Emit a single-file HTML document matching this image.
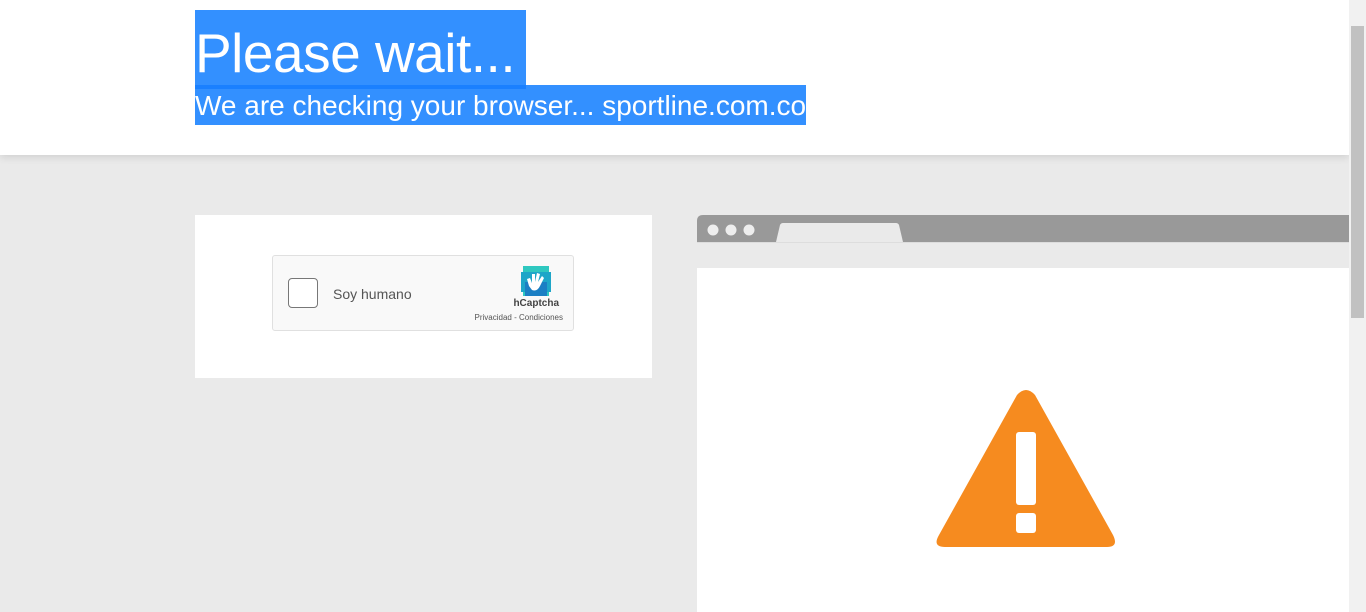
<!DOCTYPE html>
<html><head><style>
body{margin:0;width:1366px;height:612px;overflow:hidden;background:#eaeaea;font-family:"Liberation Sans",sans-serif;position:relative}
.hdr{position:absolute;left:0;top:0;width:1349px;height:155px;background:#fff;box-shadow:0 2px 8px rgba(0,0,0,.12)}
.t1{position:absolute;left:195px;top:10px;width:331px;height:79px;background:#3390ff;color:#fff;font-size:55px;line-height:86px;white-space:nowrap;overflow:hidden;letter-spacing:-0.5px}
.t2{position:absolute;left:195px;top:85px;width:611px;height:40px;background:#3390ff;color:#fff;font-size:28px;line-height:42px;white-space:nowrap;overflow:hidden;letter-spacing:0px}
.strip{position:absolute;left:195px;top:85px;width:331px;height:4px;background:#1a80ff}
.card{position:absolute;left:195px;top:215px;width:457px;height:163px;background:#fff}
.cap{position:absolute;left:272px;top:255px;width:300px;height:74px;background:#f9f9f9;border:1px solid #e0e0e0;border-radius:3px}
.cb{position:absolute;left:15px;top:22px;width:28px;height:28px;border:1px solid #777;border-radius:4px;background:#fff}
.sh{position:absolute;left:60px;top:30px;font-size:14px;color:#555}
.hc{position:absolute;right:14px;top:42px;font-size:10px;font-weight:bold;color:#444}
.pc{position:absolute;right:10px;top:57px;font-size:8px;color:#555}
.scroll{position:absolute;left:1349px;top:0;width:17px;height:612px;background:#f1f1f1}
.thumb{position:absolute;left:1351px;top:26px;width:13px;height:292px;background:#c1c1c1}
</style></head><body>
<div class="hdr"></div>
<div class="t1">Please wait...</div>
<div class="t2">We are checking your browser... sportline.com.co</div>
<div class="strip"></div>
<div class="card"></div>
<div class="cap">
<div class="cb"></div><div class="sh">Soy humano</div>
<svg style="position:absolute;left:246px;top:8px" width="34" height="34" viewBox="0 0 34 34">
<rect x="4" y="2" width="26" height="30" fill="#2fc8c0"/><rect x="2" y="8" width="30" height="20" fill="#1ea6c8"/><rect x="6" y="18" width="22" height="14" fill="#1b7fc4"/>
<path d="M10 22 L8 15 L11 14 L13 19 L13 10 L16 10 L16 18 L18 9 L21 10 L19 18 L23 12 L25 14 L21 22 Q18 28 13 26Z" fill="#fff"/></svg>
<div class="hc">hCaptcha</div>
<div class="pc">Privacidad - Condiciones</div>
</div>
<svg style="position:absolute;left:697px;top:215px" width="652" height="397">
<path d="M0 6 Q0 0 6 0 H652 V27 H0Z" fill="#999"/>
<rect x="0" y="27" width="652" height="1" fill="#ddd"/>
<circle cx="16" cy="15" r="5.5" fill="#eee"/><circle cx="34" cy="15" r="5.5" fill="#eee"/><circle cx="52" cy="15" r="5.5" fill="#eee"/>
<path d="M79 27 L83 10 Q84 8 86 8 H199 Q201 8 202 10 L206 27Z" fill="#eaeaea"/>
<rect x="0" y="53" width="652" height="344" fill="#fff"/>
<path d="M320 180 Q329 170 338 180 L416 320 Q422 332 410 332 H248 Q235 332 242 320Z" fill="#f68b1f"/>
<rect x="319" y="217" width="20" height="73" rx="3" fill="#fff"/>
<rect x="319" y="298" width="20" height="20" rx="3" fill="#fff"/>
</svg>
<div class="scroll"></div><div class="thumb"></div>
</body></html>
